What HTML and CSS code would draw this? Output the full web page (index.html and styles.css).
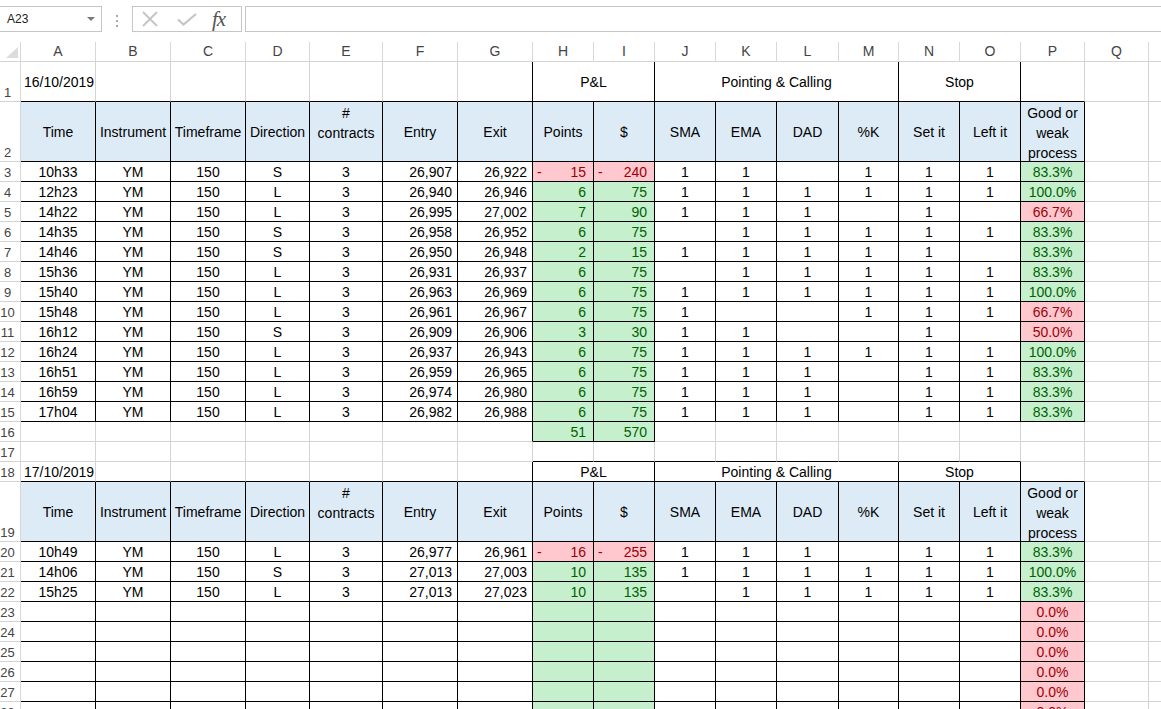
FILE: index.html
```html
<!DOCTYPE html>
<html>
<head>
  <title>Trading log</title>
  <link rel="stylesheet" href="styles.css">
</head>
<body>
<div class="formula-bar">
  <div class="name-box">
    <span>A23</span>
    <span class="name-arrow"></span>
  </div>
  <div class="bar-dots"><i></i><i></i><i></i></div>
  <div class="bar-buttons">
    <svg class="icon-cancel" width="16" height="16" viewBox="0 0 16 16">
      <path d="M1 1 L15 15 M15 1 L1 15" stroke="#c4c4c4" stroke-width="1.8" fill="none"/>
    </svg>
    <svg class="icon-enter" width="20" height="13" viewBox="0 0 20 13">
      <path d="M1 6.5 L6.5 11.5 L19 1" stroke="#c4c4c4" stroke-width="2.2" fill="none"/>
    </svg>
    <span class="fx">fx</span>
  </div>
  <div class="formula-input"></div>
</div>

<div class="sheet">
  <table class="grid">
    <colgroup>
      <col style="width: 21px">
      <col style="width: 75px"><col style="width: 75px"><col style="width: 75px">
      <col style="width: 64px"><col style="width: 73px"><col style="width: 75px">
      <col style="width: 75px"><col style="width: 61px"><col style="width: 61px">
      <col style="width: 61px"><col style="width: 61px"><col style="width: 62px">
      <col style="width: 60px"><col style="width: 61px"><col style="width: 61px">
      <col style="width: 64px"><col style="width: 64px"><col style="width: 64px">
    </colgroup>
    <thead>
      <tr>
        <th class="corner">
          <svg width="20" height="19" viewBox="0 0 20 19"><polygon points="18,5 18,16 6,16" fill="#dcdcdc"/></svg>
        </th>
        <th class="col-head">A</th>
        <th class="col-head">B</th>
        <th class="col-head">C</th>
        <th class="col-head">D</th>
        <th class="col-head">E</th>
        <th class="col-head">F</th>
        <th class="col-head">G</th>
        <th class="col-head">H</th>
        <th class="col-head">I</th>
        <th class="col-head">J</th>
        <th class="col-head">K</th>
        <th class="col-head">L</th>
        <th class="col-head">M</th>
        <th class="col-head">N</th>
        <th class="col-head">O</th>
        <th class="col-head">P</th>
        <th class="col-head">Q</th>
        <th class="col-head"></th>
      </tr>
    </thead>
    <tbody id="rows"></tbody>
  </table>
</div>

<script>
  var headers = ["Time", "Instrument", "Timeframe", "Direction", "#\ncontracts", "Entry", "Exit",
    "Points", "$", "SMA", "EMA", "DAD", "%K", "Set it", "Left it", "Good or\nweak\nprocess"];

  var day1 = [
    ["10h33", "YM", "150", "S", "3", "26,907", "26,922", "-15", "-240", "1", "1", "", "1", "1", "1", "83.3%"],
    ["12h23", "YM", "150", "L", "3", "26,940", "26,946", "6", "75", "1", "1", "1", "1", "1", "1", "100.0%"],
    ["14h22", "YM", "150", "L", "3", "26,995", "27,002", "7", "90", "1", "1", "1", "", "1", "", "66.7%"],
    ["14h35", "YM", "150", "S", "3", "26,958", "26,952", "6", "75", "", "1", "1", "1", "1", "1", "83.3%"],
    ["14h46", "YM", "150", "S", "3", "26,950", "26,948", "2", "15", "1", "1", "1", "1", "1", "", "83.3%"],
    ["15h36", "YM", "150", "L", "3", "26,931", "26,937", "6", "75", "", "1", "1", "1", "1", "1", "83.3%"],
    ["15h40", "YM", "150", "L", "3", "26,963", "26,969", "6", "75", "1", "1", "1", "1", "1", "1", "100.0%"],
    ["15h48", "YM", "150", "L", "3", "26,961", "26,967", "6", "75", "1", "", "", "1", "1", "1", "66.7%"],
    ["16h12", "YM", "150", "S", "3", "26,909", "26,906", "3", "30", "1", "1", "", "", "1", "", "50.0%"],
    ["16h24", "YM", "150", "L", "3", "26,937", "26,943", "6", "75", "1", "1", "1", "1", "1", "1", "100.0%"],
    ["16h51", "YM", "150", "L", "3", "26,959", "26,965", "6", "75", "1", "1", "1", "", "1", "1", "83.3%"],
    ["16h59", "YM", "150", "L", "3", "26,974", "26,980", "6", "75", "1", "1", "1", "", "1", "1", "83.3%"],
    ["17h04", "YM", "150", "L", "3", "26,982", "26,988", "6", "75", "1", "1", "1", "", "1", "1", "83.3%"]
  ];

  var day2 = [
    ["10h49", "YM", "150", "L", "3", "26,977", "26,961", "-16", "-255", "1", "1", "1", "", "1", "1", "83.3%"],
    ["14h06", "YM", "150", "S", "3", "27,013", "27,003", "10", "135", "1", "1", "1", "1", "1", "1", "100.0%"],
    ["15h25", "YM", "150", "L", "3", "27,013", "27,023", "10", "135", "", "1", "1", "1", "1", "1", "83.3%"]
  ];

  // merged cells above each table: start column -> [span, label]
  var groups = {7: [2, "P&L"], 9: [4, "Pointing & Calling"], 13: [2, "Stop"]};
  var LAST_ROW = 28;
  var COLS = 18;

  // cells that carry a black border all round
  function isBoxed(r, c) {
    if ((r >= 2 && r <= 15) || r >= 19) return c <= 15;
    if (r === 1 || r === 18) return c >= 7 && c <= 14;
    if (r === 16) return c === 7 || c === 8;
    return false;
  }

  function tradeCell(value, c) {
    if (c === 5 || c === 6) return {text: value, cls: "price"};
    if (c === 7 || c === 8) {
      if (value.charAt(0) === "-") return {text: value.slice(1), cls: "num bad", neg: true};
      return {text: value, cls: "num good"};
    }
    if (c === 15) return {text: value, cls: "mid " + (parseFloat(value) >= 80 ? "good" : "bad")};
    return {text: value, cls: "mid"};
  }

  function cellData(r, c) {
    if (r === 1 && c === 0) return {text: "16/10/2019", cls: "date"};
    if (r === 18 && c === 0) return {text: "17/10/2019", cls: "date"};
    if ((r === 2 || r === 19) && c <= 15) return {text: headers[c], cls: "mid head"};

    var trade = null;
    if (r >= 3 && r <= 15) trade = day1[r - 3];
    if (r >= 20 && r <= 22) trade = day2[r - 20];
    if (trade && c <= 15) return tradeCell(trade[c], c);

    if (r === 16 && c === 7) return {text: "51", cls: "num good"};
    if (r === 16 && c === 8) return {text: "570", cls: "num good"};
    if (r >= 23) {
      if (c === 7 || c === 8) return {text: "", cls: "good"};
      if (c === 15) return {text: "0.0%", cls: "mid bad"};
    }
    return null;
  }

  function fill(td, data) {
    td.className = data.cls;
    if (data.text.indexOf("\n") !== -1) {
      var stack = document.createElement("div");
      stack.className = "stack";
      var lines = data.text.split("\n");
      for (var i = 0; i < lines.length; i++) {
        var line = document.createElement("span");
        line.textContent = lines[i];
        stack.appendChild(line);
      }
      td.appendChild(stack);
      return;
    }
    if (data.neg) {
      var sign = document.createElement("span");
      sign.className = "sign";
      sign.textContent = "-";
      td.appendChild(sign);
    }
    td.appendChild(document.createTextNode(data.text));
  }

  function buildSheet() {
    var body = document.getElementById("rows");
    for (var r = 1; r <= LAST_ROW; r++) {
      var tr = document.createElement("tr");
      if (r === 1) tr.className = "h40";
      if (r === 2 || r === 19) tr.className = "h60";

      var th = document.createElement("th");
      th.className = "row-head";
      var num = document.createElement("span");
      num.textContent = r;
      th.appendChild(num);
      tr.appendChild(th);

      for (var c = 0; c < COLS; c++) {
        var td = document.createElement("td");
        var span = 1;
        if ((r === 1 || r === 18) && groups[c]) {
          span = groups[c][0];
          td.colSpan = span;
          td.className = "mid";
          td.textContent = groups[c][1];
        } else {
          var data = cellData(r, c);
          if (data) fill(td, data);
        }
        var end = c + span - 1;
        if (isBoxed(r, end) || isBoxed(r, end + 1)) td.classList.add("br");
        if (isBoxed(r, c) || isBoxed(r + 1, c)) td.classList.add("bb");
        tr.appendChild(td);
        c = end;
      }
      body.appendChild(tr);
    }
  }

  buildSheet();
</script>
</body>
</html>
```

FILE: styles.css
```css
body {
  margin: 0;
  background-color: #fff;
  font-family: "Liberation Sans", Arial, sans-serif;
  overflow: hidden;
}

/* formula bar */

.formula-bar {
  display: flex;
  align-items: flex-start;
  height: 42px;
  padding-top: 6px;
  box-sizing: border-box;
}

.name-box {
  display: flex;
  align-items: center;
  justify-content: space-between;
  width: 102px;
  height: 26px;
  padding: 0 6px 0 7px;
  box-sizing: border-box;
  border: 1px solid #c6c6c6;
  border-left: none;
  font-size: 12px;
  color: #222;
}

.name-arrow {
  width: 0;
  height: 0;
  border-left: 4px solid transparent;
  border-right: 4px solid transparent;
  border-top: 4px solid #7a7a7a;
}

.bar-dots {
  display: flex;
  flex-direction: column;
  align-items: center;
  gap: 3px;
  width: 30px;
  margin-top: 9px;
}

.bar-dots i {
  width: 2px;
  height: 2px;
  background-color: #a8a8a8;
}

.bar-buttons {
  display: flex;
  align-items: center;
  width: 110px;
  height: 26px;
  padding-left: 9px;
  box-sizing: border-box;
  border: 1px solid #c6c6c6;
}

.icon-enter {
  margin-left: 19px;
}

.fx {
  margin-left: 15px;
  font-family: "Liberation Serif", "Times New Roman", serif;
  font-style: italic;
  font-size: 21px;
  line-height: 22px;
  color: #555;
  letter-spacing: -1px;
}

.formula-input {
  flex: 1;
  height: 26px;
  margin-left: 3px;
  box-sizing: border-box;
  border: 1px solid #c6c6c6;
  border-right: none;
}

/* sheet grid */

.sheet {
  overflow: hidden;
}

.grid {
  border-collapse: separate;
  border-spacing: 0;
  table-layout: fixed;
  width: 1213px;
}

.grid th {
  padding: 0;
  height: 19px;
  font-weight: normal;
  color: #444;
  border-right: 1px solid #d8d8d8;
  border-bottom: 1px solid #d4d4d4;
}

.corner {
  vertical-align: top;
  line-height: 0;
}

.col-head {
  font-size: 14px;
  line-height: 19px;
  text-align: center;
}

.grid th.row-head {
  font-size: 13px;
  line-height: 19px;
  text-align: center;
  vertical-align: bottom;
  padding-right: 5px;
}

.row-head span {
  position: relative;
  top: 1px;
}

.grid td {
  height: 17px;
  padding: 2px 3px 0;
  font-size: 14px;
  line-height: 17px;
  color: #000;
  white-space: nowrap;
  overflow: hidden;
  vertical-align: middle;
  border-right: 1px solid #d4d4d4;
  border-bottom: 1px solid #d4d4d4;
}

.grid tr.h40 td {
  height: 37px;
}

.grid tr.h60 td {
  height: 57px;
}

.grid td.br {
  border-right-color: #000;
}

.grid td.bb {
  border-bottom-color: #000;
}

.grid td.mid {
  text-align: center;
}

.grid td.price {
  text-align: right;
  padding-right: 5px;
}

.grid td.num {
  text-align: right;
  padding-right: 7px;
}

.grid td.head {
  background-color: #ddebf7;
}

.grid td.good {
  background-color: #c6efce;
  color: #006100;
}

.grid td.bad {
  background-color: #ffc7ce;
  color: #9c0006;
}

.sign {
  float: left;
  padding-left: 1px;
}

.stack {
  display: flex;
  flex-direction: column;
  height: 57px;
  margin-top: -2px;
  line-height: 20px;
}
```
